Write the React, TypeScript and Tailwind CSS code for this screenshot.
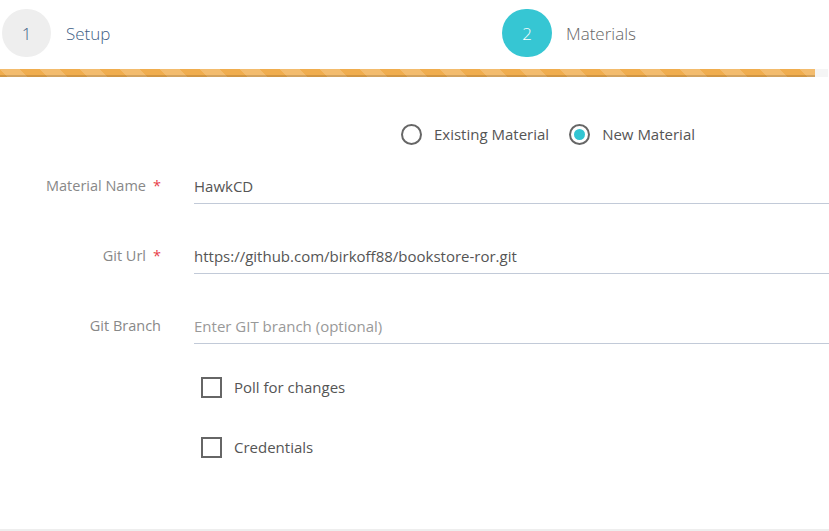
import React from 'react';

const font = { fontFamily: '"Open Sans", "Noto Sans", sans-serif' };

interface FieldProps {
  label: string;
  required?: boolean;
  value?: string;
  placeholder?: string;
}

const Field: React.FC<FieldProps> = ({ label, required, value, placeholder }) => (
  <div className="flex items-start h-[36px]">
    <div className="w-[161px] h-[35px] flex items-center justify-end text-[14.5px] text-[#888]">
      <span>{label}</span>
      {required && <span className="ml-[7px] text-[#e73d4a]">*</span>}
    </div>
    <input
      className="ml-[33px] flex-1 h-[36px] border-b border-[#c2cad8] bg-transparent text-[15px] text-[#555] placeholder:text-[#999] outline-none px-0"
      defaultValue={value}
      placeholder={placeholder}
      style={font}
    />
  </div>
);

const Radio: React.FC<{ label: string; checked?: boolean }> = ({ label, checked }) => (
  <label className="flex items-center cursor-pointer">
    <span className="w-[21px] h-[21px] rounded-full border-2 border-[#666] flex items-center justify-center">
      {checked && <span className="w-[11px] h-[11px] rounded-full bg-[#32c5d2]" />}
    </span>
    <span className="ml-[12px] text-[15px] text-[#555]">{label}</span>
  </label>
);

const Check: React.FC<{ label: string }> = ({ label }) => (
  <label className="flex items-center h-[21px] ml-[201px] cursor-pointer">
    <span className="w-[21px] h-[21px] border-2 border-[#666]" />
    <span className="ml-[12px] text-[15px] text-[#555]">{label}</span>
  </label>
);

export default function App() {
  return (
    <div className="w-[829px] h-[531px] bg-white flex flex-col overflow-hidden" style={font}>
      {/* Wizard steps */}
      <div className="h-[69px] flex items-start pt-[9px]">
        <div className="w-[502px] pl-[2px] flex items-center">
          <div className="w-[49px] h-[48px] pt-[2px] rounded-full bg-[#eeeeee] flex items-center justify-center text-[17px] font-light text-[#3f6186]">
            1
          </div>
          <span className="ml-[15px] pt-[2px] text-[17px] font-light text-[#3f6186]">Setup</span>
        </div>
        <div className="flex items-center">
          <div className="w-[50px] h-[48px] pt-[2px] rounded-full bg-[#36c6d3] flex items-center justify-center text-[17px] font-light text-white">
            2
          </div>
          <span className="ml-[14px] pt-[2px] text-[17px] font-light text-[#666]">Materials</span>
        </div>
      </div>

      {/* Progress */}
      <div className="h-[8px] w-[828px] bg-[#f5f5f5] flex">
        <div className="w-[815px] h-full bg-[#f0ad4e] shadow-[inset_0_-2px_0_rgba(0,0,0,0.13)] bg-[linear-gradient(45deg,rgba(255,255,255,.18)_25%,transparent_25%,transparent_50%,rgba(255,255,255,.18)_50%,rgba(255,255,255,.18)_75%,transparent_75%,transparent)] bg-size-[40px_40px]" />
      </div>

      {/* Material type */}
      <div className="mt-[47px] flex items-center h-[21px] pl-[401px] gap-[20px]">
        <Radio label="Existing Material" />
        <Radio label="New Material" checked />
      </div>

      {/* Fields */}
      <div className="mt-[23px] flex flex-col gap-[34px]">
        <Field label="Material Name" required value="HawkCD" />
        <Field label="Git Url" required value="https://github.com/birkoff88/bookstore-ror.git" />
        <Field label="Git Branch" placeholder="Enter GIT branch (optional)" />
      </div>

      <div className="mt-[33px] flex flex-col gap-[39px]">
        <Check label="Poll for changes" />
        <Check label="Credentials" />
      </div>

      <div className="mt-auto mb-0 h-[2px] bg-[#eeeeee]" />
    </div>
  );
}
